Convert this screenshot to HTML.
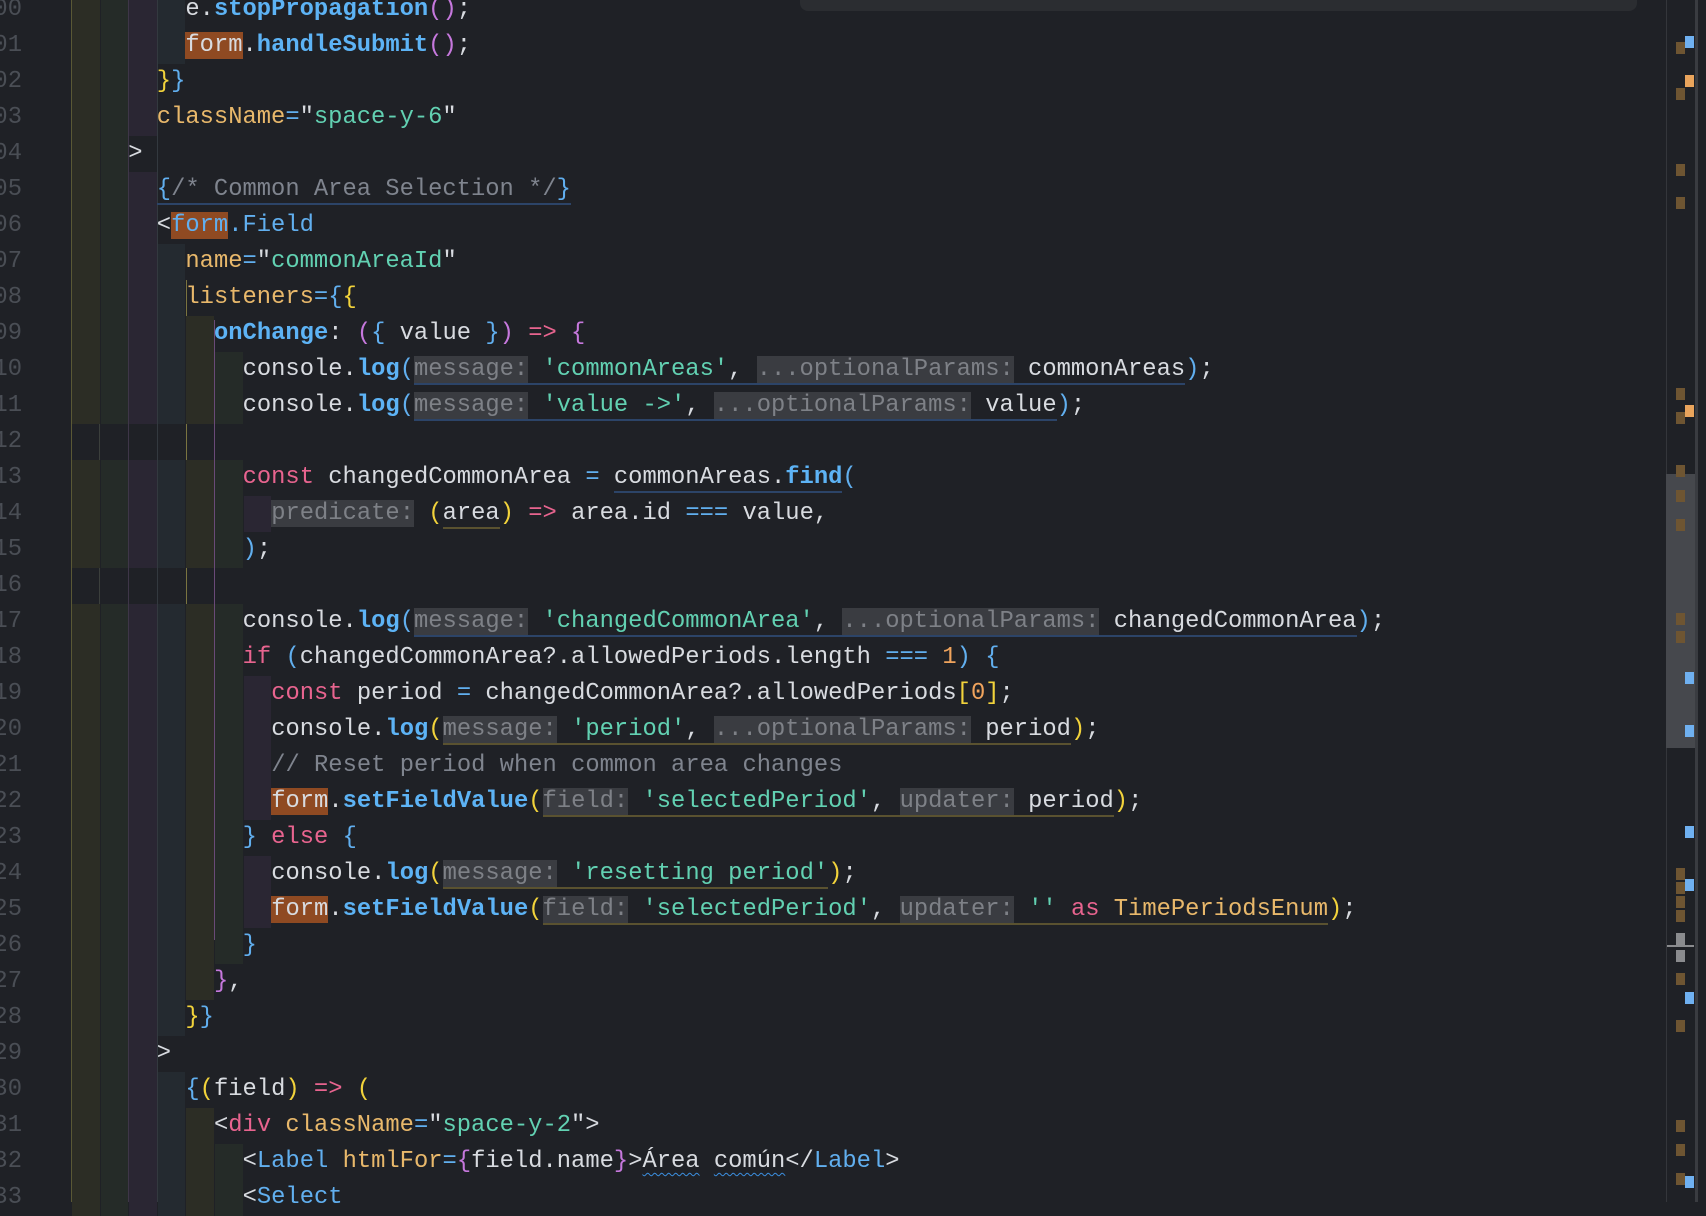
<!DOCTYPE html>
<html><head><meta charset="utf-8"><style>
html,body{margin:0;padding:0;}
body{width:1706px;height:1202px;overflow:hidden;background:#1f2126;position:relative;font-family:"Liberation Mono","DejaVu Sans Mono",monospace;font-size:23.8px;color:#d8dbe0;}
.ln{position:absolute;left:-34px;width:56px;text-align:right;color:#4a4e55;height:36px;line-height:36px;}
.l{position:absolute;height:36px;line-height:36px;white-space:pre;}
.b{position:absolute;height:36px;}
.g{position:absolute;top:0;width:1px;height:1202px;}
.bl{color:#5db3f5;font-weight:bold}
.fn{color:#61afef}
.pu{color:#c678dd}
.ye{color:#f2d33b}
.pk{color:#e8648f}
.at{color:#e8b86b}
.st{color:#62d1b2}
.cm{color:#7f848e}
.nu{color:#f0a45d}
.hl{background:#8f4a22}
.h{background:#3a3c41;color:#7e8187}
.u{border-bottom:2px solid #2c4468}
.uy{border-bottom:2px solid #5a5230}
.sq{text-decoration:underline wavy #3b8fe0;text-decoration-thickness:1px;text-underline-offset:5px}
</style></head><body>
<div class="g" style="left:71px;background:#5a5835"></div>
<div class="g" style="left:99px;background:#3b3f3c"></div>
<div class="g" style="left:128px;background:#3e3648"></div>
<div class="g" style="left:157px;background:#33393f"></div>
<div class="g" style="left:186px;background:#7a7440;top:280px;height:700px"></div>
<div class="g" style="left:214px;background:#6a4a78;top:320px;height:620px"></div>
<div id="bands"></div>
<div id="code"></div>
<div style="position:absolute;left:800px;top:-10px;width:837px;height:21px;background:#2b2d31;border-radius:8px;"></div>
<div style="position:absolute;left:1666px;top:0;width:1px;height:1202px;background:#34363b"></div>
<div style="position:absolute;left:1695px;top:0;width:3px;height:1202px;background:#3a3c41"></div>
<div style="position:absolute;left:1666px;top:474px;width:29px;height:274px;background:#46484d"></div>
<div id="marks"></div>
<script>
var W=14.3,X0=71;
var cols=['#2c2d25','#252b28','#2a2633','#242a30'];
var L=[
[8,'e.<span class="bl">stopPropagation</span><span class="pu">()</span>;'],
[8,'<span class="hl">form</span>.<span class="bl">handleSubmit</span><span class="pu">()</span>;'],
[6,'<span class="ye">}</span><span class="fn">}</span>'],
[6,'<span class="at">className</span><span class="fn">=</span>"<span class="st">space-y-6</span>"'],
[4,'&gt;'],
[6,'<span class="u"><span class="fn">{</span><span class="cm">/* Common Area Selection */</span><span class="fn">}</span></span>'],
[6,'&lt;<span class="fn"><span class="hl">form</span>.Field</span>'],
[8,'<span class="at">name</span><span class="fn">=</span>"<span class="st">commonAreaId</span>"'],
[8,'<span class="at">listeners</span><span class="fn">={</span><span class="ye">{</span>'],
[10,'<span class="bl">onChange</span>: <span class="pu">(</span><span class="fn">{</span> value <span class="fn">}</span><span class="pu">)</span> <span class="pk">=&gt;</span> <span class="pu">{</span>'],
[12,'console.<span class="bl">log</span><span class="fn">(</span><span class="u"><span class="h">message:</span> <span class="st">\'commonAreas\'</span>, <span class="h">...optionalParams:</span> commonAreas</span><span class="fn">)</span>;'],
[12,'console.<span class="bl">log</span><span class="fn">(</span><span class="u"><span class="h">message:</span> <span class="st">\'value -&gt;\'</span>, <span class="h">...optionalParams:</span> value</span><span class="fn">)</span>;'],
[-1,''],
[12,'<span class="pk">const</span> changedCommonArea <span class="fn">=</span> <span class="u">commonAreas.<span class="bl">find</span></span><span class="fn">(</span>'],
[14,'<span class="h">predicate:</span> <span class="ye">(</span><span class="uy">area</span><span class="ye">)</span> <span class="pk">=&gt;</span> area.id <span class="fn">===</span> value,'],
[12,'<span class="fn">)</span>;'],
[-1,''],
[12,'console.<span class="bl">log</span><span class="fn">(</span><span class="u"><span class="h">message:</span> <span class="st">\'changedCommonArea\'</span>, <span class="h">...optionalParams:</span> changedCommonArea</span><span class="fn">)</span>;'],
[12,'<span class="pk">if</span> <span class="fn">(</span>changedCommonArea?.allowedPeriods.length <span class="fn">===</span> <span class="nu">1</span><span class="fn">)</span> <span class="fn">{</span>'],
[14,'<span class="pk">const</span> period <span class="fn">=</span> changedCommonArea?.allowedPeriods<span class="ye">[</span><span class="nu">0</span><span class="ye">]</span>;'],
[14,'console.<span class="bl">log</span><span class="ye">(</span><span class="uy"><span class="h">message:</span> <span class="st">\'period\'</span>, <span class="h">...optionalParams:</span> period</span><span class="ye">)</span>;'],
[14,'<span class="cm">// Reset period when common area changes</span>'],
[14,'<span class="hl">form</span>.<span class="bl">setFieldValue</span><span class="ye">(</span><span class="uy"><span class="h">field:</span> <span class="st">\'selectedPeriod\'</span>, <span class="h">updater:</span> period</span><span class="ye">)</span>;'],
[12,'<span class="fn">}</span> <span class="pk">else</span> <span class="fn">{</span>'],
[14,'console.<span class="bl">log</span><span class="ye">(</span><span class="uy"><span class="h">message:</span> <span class="st">\'resetting period\'</span></span><span class="ye">)</span>;'],
[14,'<span class="hl">form</span>.<span class="bl">setFieldValue</span><span class="ye">(</span><span class="uy"><span class="h">field:</span> <span class="st">\'selectedPeriod\'</span>, <span class="h">updater:</span> <span class="st">\'\'</span> <span class="pk">as</span> <span class="at">TimePeriodsEnum</span></span><span class="ye">)</span>;'],
[12,'<span class="fn">}</span>'],
[10,'<span class="pu">}</span>,'],
[8,'<span class="ye">}</span><span class="fn">}</span>'],
[6,'&gt;'],
[8,'<span class="fn">{</span><span class="ye">(</span>field<span class="ye">)</span> <span class="pk">=&gt;</span> <span class="ye">(</span>'],
[10,'&lt;<span class="pk">div</span> <span class="at">className</span><span class="fn">=</span>"<span class="st">space-y-2</span>"&gt;'],
[12,'&lt;<span class="fn">Label</span> <span class="at">htmlFor</span><span class="fn">=</span><span class="pu">{</span>field.name<span class="pu">}</span>&gt;<span class="sq">Área</span> <span class="sq">común</span>&lt;/<span class="fn">Label</span>&gt;'],
[12,'&lt;<span class="fn">Select</span>']
];
var code='',bands='';
for(var i=0;i<L.length;i++){
 var yy=-8+36*i;
 code+='<div class="ln" style="top:'+yy+'px">'+(100+i)+'</div>';
 var c=L[i][0];
 if(c<0)continue;
 for(var k=0;k*2<c;k++){
  bands+='<div class="b" style="top:'+yy+'px;left:'+(X0+k*2*W+1)+'px;width:'+(2*W-1)+'px;background:'+cols[k%4]+'"></div>';
 }
 code+='<div class="l" style="top:'+yy+'px;left:'+(X0+c*W)+'px">'+L[i][1]+'</div>';
}
document.getElementById('bands').innerHTML=bands;
document.getElementById('code').innerHTML=code;
var m=[[36,'b'],[75,'o'],[42,'r'],[88,'r'],[164,'r'],[197,'r'],[388,'r'],[405,'o'],[412,'r'],[465,'r'],[490,'r'],[519,'r'],[613,'r'],[631,'r'],[672,'b'],[725,'b'],[826,'b'],[868,'r'],[879,'b'],[882,'r'],[896,'r'],[910,'r'],[933,'g'],[950,'g'],[973,'r'],[992,'b'],[1020,'r'],[1120,'r'],[1144,'r'],[1173,'r'],[1176,'b']];
var mh='';
m.forEach(function(a){
 var x=a[1]=='r'||a[1]=='g'?1676:1685;
 var col={b:'#6fb0f0',o:'#e9a45c',r:'#6e5532',g:'#8a8b8e'}[a[1]];
 mh+='<div style="position:absolute;left:'+x+'px;top:'+a[0]+'px;width:9px;height:12px;background:'+col+'"></div>';
});
mh+='<div style="position:absolute;left:1667px;top:945px;width:27px;height:2px;background:#8a8b8e"></div>';
document.getElementById('marks').innerHTML=mh;
</script>
</body></html>
